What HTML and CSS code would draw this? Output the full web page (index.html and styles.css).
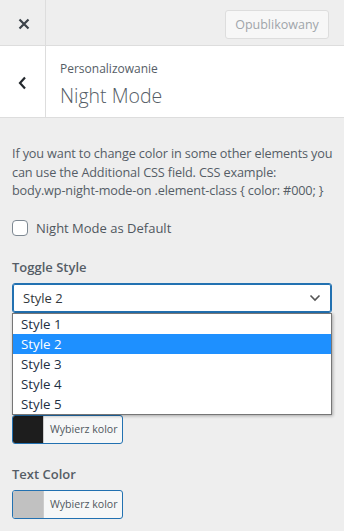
FILE: index.html
```html
<!DOCTYPE html>
<html>
<head>
<meta charset="utf-8">
<link rel="stylesheet" href="styles.css">
</head>
<body>
<div class="panel">
  <div class="topbar">
    <div class="close">
      <svg width="12" height="12" viewBox="0 0 12 12"><path d="M1.5 1.5 L10.5 10.5 M10.5 1.5 L1.5 10.5" stroke="#3c434a" stroke-width="2.2" fill="none"/></svg>
    </div>
    <div class="topbar-right">
      <button class="publish">Opublikowany</button>
    </div>
  </div>
  <div class="header">
    <div class="back">
      <svg width="9" height="14" viewBox="0 0 9 14"><path d="M7 1.5 L2 7 L7 12.5" stroke="#23282d" stroke-width="2.2" fill="none"/></svg>
    </div>
    <div class="titles">
      <div class="crumb">Personalizowanie</div>
      <div class="title">Night Mode</div>
    </div>
  </div>
  <div class="content">
    <p class="desc">If you want to change color in some other elements you<br>can use the Additional CSS field. CSS example:<br>body.wp-night-mode-on .element-class { color: #000; }</p>
    <label class="check"><span class="box"></span>Night Mode as Default</label>
    <div class="field field-toggle">
      <div class="label">Toggle Style</div>
      <div class="select-wrap">
        <div class="select">
          <span>Style 2</span>
          <svg width="12" height="8" viewBox="0 0 12 8"><path d="M1.5 1.5 L6 6 L10.5 1.5" stroke="#555" stroke-width="1.6" fill="none"/></svg>
        </div>
        <ul class="options">
          <li>Style 1</li>
          <li class="sel">Style 2</li>
          <li>Style 3</li>
          <li>Style 4</li>
          <li>Style 5</li>
        </ul>
      </div>
    </div>
    <div class="field field-bg">
      <div class="color"><span class="swatch dark"></span><span class="pick">Wybierz kolor</span></div>
    </div>
    <div class="field field-text">
      <div class="label">Text Color</div>
      <div class="color"><span class="swatch light"></span><span class="pick">Wybierz kolor</span></div>
    </div>
  </div>
</div>
</body>
</html>
```
FILE: styles.css
```css
html, body { margin: 0; padding: 0; }
body {
  font-family: "Open Sans", "Noto Sans", sans-serif;
  font-size: 13px;
  color: #50575e;
  background: #eee;
  width: 344px;
  height: 531px;
  overflow: hidden;
}
.panel { background: #eee; }
.topbar {
  display: flex;
  height: 45px;
  border-bottom: 1px solid #ddd;
  background: #eee;
}
.close {
  width: 46px;
  border-right: 1px solid #ddd;
  display: flex;
  align-items: center;
  justify-content: center;
  padding-top: 2px;
  padding-left: 3px;
  box-sizing: border-box;
}
.topbar-right {
  flex: 1;
  display: flex;
  justify-content: flex-end;
  align-items: center;
  padding-right: 15px;
}
.publish {
  font-family: inherit;
  font-size: 12.5px;
  color: #a0a5aa;
  background: #f7f7f7;
  border: 1px solid #ddd;
  border-radius: 3px;
  height: 29px;
  width: 104px;
  padding: 0;
  margin-top: 3px;
}
.header {
  display: flex;
  background: #fff;
  height: 71px;
  border-bottom: 1px solid #ddd;
}
.back {
  width: 46px;
  border-right: 1px solid #ddd;
  display: flex;
  align-items: center;
  justify-content: center;
  padding-right: 1px;
  padding-top: 2px;
  box-sizing: border-box;
}
.titles {
  padding: 14px 0 0 14px;
}
.crumb {
  font-size: 12px;
  color: #555d66;
  line-height: 18px;
}
.title {
  font-size: 19.5px;
  font-weight: 300;
  color: #555d66;
  line-height: 26px;
  margin-top: 5px;
}
.content { padding: 26px 12px 0 12px; }
.desc {
  margin: 0;
  font-size: 12.7px;
  line-height: 18.5px;
  color: #555d66;
  letter-spacing: -0.15px;
  white-space: nowrap;
}
.check {
  display: flex;
  align-items: center;
  margin-top: 19px;
  font-size: 13px;
  color: #50575e;
}
.box {
  width: 14px;
  height: 14px;
  border: 1px solid #7e8993;
  border-radius: 4px;
  background: #fff;
  margin-right: 8px;
}
.field-toggle { margin-top: 21px; }
.field-bg { margin-top: 102px; }
.field-text { margin-top: 21px; }
.label {
  font-weight: 600;
  font-size: 13px;
  color: #555d66;
  line-height: 18px;
  margin-bottom: 7px;
}
.select-wrap { position: relative; }
.select {
  height: 28px;
  border: 1px solid #2271b1;
  border-radius: 3px;
  background: #fff;
  box-shadow: 0 0 0 1px #2271b1 inset;
  display: flex;
  align-items: center;
  justify-content: space-between;
  padding: 0 10px 0 10px;
  font-size: 13px;
}
.select span { color: #32373c; }
.options {
  position: absolute;
  left: 0;
  right: 0;
  top: 30px;
  margin: 0;
  padding: 0;
  list-style: none;
  background: #fff;
  border: 1px solid #767676;
  box-shadow: 1px 1px 3px rgba(0,0,0,0.3);
  z-index: 2;
}
.options li {
  height: 20px;
  line-height: 20px;
  padding-left: 8px;
  font-size: 13.3px;
  color: #1d2f44;
}
.options li.sel { background: #1e90ff; color: #fff; }
.color {
  display: flex;
  width: 109px;
  height: 27px;
  border: 1px solid #2271b1;
  border-radius: 3px;
  overflow: hidden;
  background: #f6f7f7;
}
.swatch { width: 30px; }
.swatch.dark { background: #1d1d1d; }
.swatch.light { background: #c1c1c1; }
.pick {
  flex: 1;
  border-left: 1px solid #ccc;
  font-size: 10.6px;
  color: #50575e;
  display: flex;
  align-items: center;
  padding-left: 6px;
}
```
